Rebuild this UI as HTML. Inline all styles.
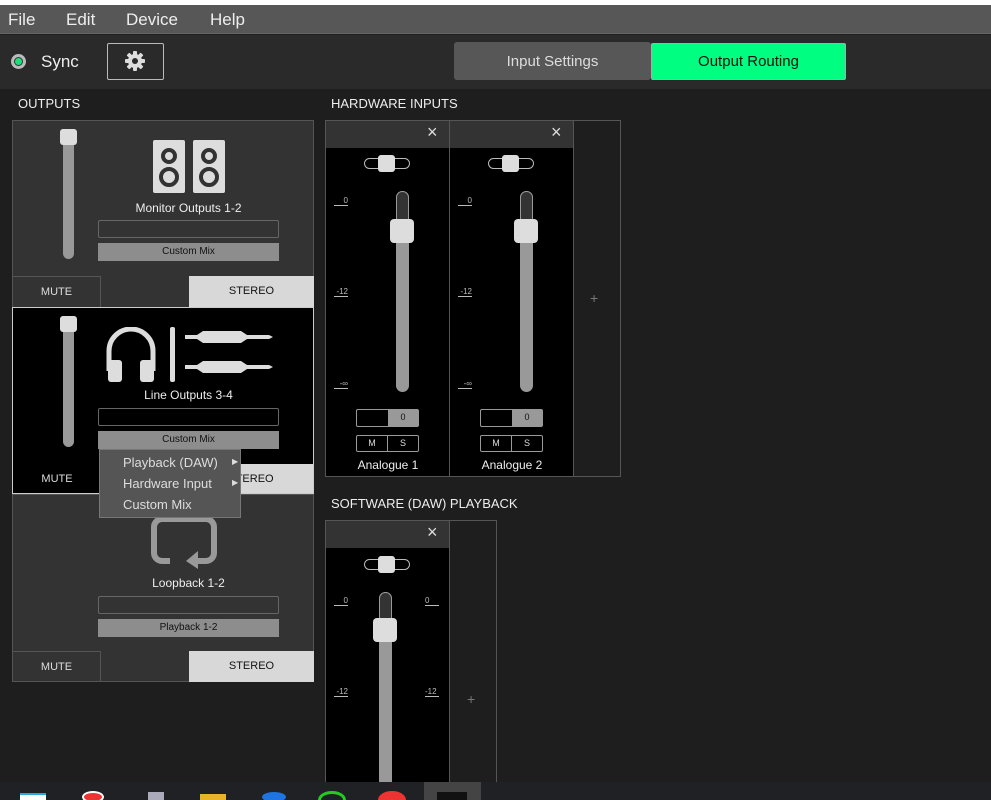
<!DOCTYPE html>
<html style="overflow:hidden;width:991px;height:800px"><head><style>
*{box-sizing:border-box;margin:0;padding:0}
body{width:991px;height:800px;overflow:hidden;background:#1e1e1e;font-family:"Liberation Sans",sans-serif;position:relative;color:#ddd}
.a{position:absolute}
.t{position:absolute;white-space:nowrap}
.btn{position:absolute;font-size:11px;text-align:center;line-height:30px}
.lbl{position:absolute;font-size:8px;color:#bbb;border-bottom:1px solid #bbb;width:14px;text-align:right;line-height:9px}
</style></head><body>
<div class="a" style="left:0;top:0;width:991px;height:5px;background:#fff"></div>
<div class="a" style="left:0;top:5px;width:991px;height:29px;background:#575757;border-bottom:1px solid #666"></div>
<div class="t" style="left:8px;top:10px;font-size:17px;color:#eee">File</div>
<div class="t" style="left:66px;top:10px;font-size:17px;color:#eee">Edit</div>
<div class="t" style="left:126px;top:10px;font-size:17px;color:#eee">Device</div>
<div class="t" style="left:210px;top:10px;font-size:17px;color:#eee">Help</div>
<div class="a" style="left:0;top:35px;width:991px;height:54px;background:#2a2a2a"></div>
<div class="a" style="left:11px;top:54px;width:15px;height:15px;border-radius:50%;background:#bbb"></div>
<div class="a" style="left:14px;top:57px;width:9px;height:9px;border-radius:50%;background:#1ee07a;border:1px solid #333"></div>
<div class="t" style="left:41px;top:52px;font-size:17px;color:#eee">Sync</div>
<div class="a" style="left:107px;top:43px;width:57px;height:37px;border:1px solid #bbb;border-radius:2px"></div>
<svg class="a" style="left:124px;top:50px" width="22" height="22" viewBox="0 0 22 22"><g fill="#ddd"><circle cx="11" cy="11" r="7"/><g id="tt"><rect x="9" y="1" width="4" height="20" rx="1"/></g><rect x="9" y="1" width="4" height="20" rx="1" transform="rotate(45 11 11)"/><rect x="9" y="1" width="4" height="20" rx="1" transform="rotate(90 11 11)"/><rect x="9" y="1" width="4" height="20" rx="1" transform="rotate(135 11 11)"/></g><circle cx="11" cy="11" r="3" fill="#2a2a2a"/></svg>
<div class="a" style="left:454px;top:42px;width:197px;height:38px;background:#575757;border-radius:3px"></div>
<div class="t" style="left:454px;top:53px;width:197px;text-align:center;font-size:15px;color:#ddd">Input Settings</div>
<div class="a" style="left:651px;top:43px;width:195px;height:37px;background:#00ff80;border:1px solid #aaa;border-radius:2px"></div>
<div class="t" style="left:651px;top:53px;width:195px;text-align:center;font-size:15px;color:#111">Output Routing</div>

<div class="t" style="left:18px;top:96px;font-size:13px;color:#eee">OUTPUTS</div>
<div class="t" style="left:331px;top:96px;font-size:13px;color:#eee">HARDWARE INPUTS</div>
<div class="t" style="left:331px;top:496px;font-size:13px;color:#eee">SOFTWARE (DAW) PLAYBACK</div>

<!-- panel 1 -->
<div class="a" style="left:12px;top:120px;width:302px;height:188px;background:#333;border:1px solid #555"></div>
<div class="a" style="left:63px;top:132px;width:11px;height:127px;background:#999;border-radius:6px"></div>
<div class="a" style="left:60px;top:129px;width:17px;height:16px;background:#ddd;border-radius:3px"></div>
<svg class="a" style="left:152px;top:140px" width="74" height="54"><g fill="#ddd"><rect x="1" y="0" width="32" height="53" rx="2"/><rect x="41" y="0" width="32" height="53" rx="2"/></g><g fill="none" stroke="#333" stroke-width="4"><circle cx="17" cy="16" r="6"/><circle cx="17" cy="37" r="8"/><circle cx="57" cy="16" r="6"/><circle cx="57" cy="37" r="8"/></g></svg>
<div class="t" style="left:98px;top:201px;width:181px;text-align:center;font-size:12px;color:#eee">Monitor Outputs 1-2</div>
<div class="a" style="left:98px;top:220px;width:181px;height:18px;border:1px solid #666;border-radius:2px"></div>
<div class="a" style="left:98px;top:243px;width:181px;height:18px;background:#8d8d8d"></div>
<div class="t" style="left:98px;top:246px;width:181px;text-align:center;font-size:10px;color:#111">Custom Mix</div>
<div class="btn" style="left:12px;top:276px;width:89px;height:32px;border:1px solid #555;color:#ddd">MUTE</div>
<div class="btn" style="left:189px;top:276px;width:125px;height:32px;background:#d8d8d8;color:#111">STEREO</div>

<!-- panel 3 -->
<div class="a" style="left:12px;top:494px;width:302px;height:188px;background:#333;border:1px solid #555"></div>
<svg class="a" style="left:150px;top:515px" width="72" height="54"><path d="M20 46 H12 a8 8 0 0 1 -8 -8 V12 a8 8 0 0 1 8 -8 H56 a8 8 0 0 1 8 8 V38 a8 8 0 0 1 -8 8 H44" fill="none" stroke="#999" stroke-width="6"/><path d="M48 36 L36 46 L48 54 Z" fill="#999"/></svg>
<div class="t" style="left:98px;top:576px;width:181px;text-align:center;font-size:12px;color:#eee">Loopback 1-2</div>
<div class="a" style="left:98px;top:596px;width:181px;height:18px;border:1px solid #666;border-radius:2px"></div>
<div class="a" style="left:98px;top:619px;width:181px;height:18px;background:#8d8d8d"></div>
<div class="t" style="left:98px;top:622px;width:181px;text-align:center;font-size:10px;color:#111">Playback 1-2</div>
<div class="btn" style="left:12px;top:651px;width:89px;height:31px;border:1px solid #555;color:#ddd">MUTE</div>
<div class="btn" style="left:189px;top:651px;width:125px;height:31px;background:#d8d8d8;color:#111">STEREO</div>

<!-- panel 2 -->
<div class="a" style="left:12px;top:307px;width:302px;height:187px;background:#000;border:1px solid #ccc"></div>
<div class="a" style="left:63px;top:319px;width:11px;height:128px;background:#999;border-radius:6px"></div>
<div class="a" style="left:60px;top:316px;width:17px;height:16px;background:#ddd;border-radius:3px"></div>
<svg class="a" style="left:105px;top:327px" width="170" height="56"><g fill="#ddd"><path d="M4 44 V24 a22 22 0 0 1 44 0 V44" fill="none" stroke="#ddd" stroke-width="5"/><rect x="3" y="33" width="14" height="22" rx="3"/><rect x="35" y="33" width="14" height="22" rx="3"/><rect x="65" y="0" width="5" height="55" rx="2"/><path d="M80 8 h12 l6 -4 h38 l6 4 h22 l4 2 l-4 2 h-22 l-6 4 h-38 l-6 -4 h-12 z"/><path d="M80 38 h12 l6 -4 h38 l6 4 h22 l4 2 l-4 2 h-22 l-6 4 h-38 l-6 -4 h-12 z"/></g></svg>
<div class="t" style="left:98px;top:388px;width:181px;text-align:center;font-size:12px;color:#eee">Line Outputs 3-4</div>
<div class="a" style="left:98px;top:408px;width:181px;height:18px;border:1px solid #666;border-radius:2px"></div>
<div class="a" style="left:98px;top:431px;width:181px;height:18px;background:#8d8d8d"></div>
<div class="t" style="left:98px;top:434px;width:181px;text-align:center;font-size:10px;color:#111">Custom Mix</div>
<div class="btn" style="left:13px;top:464px;width:88px;height:29px;color:#ddd">MUTE</div>
<div class="btn" style="left:189px;top:464px;width:124px;height:29px;background:#d8d8d8;color:#111">STEREO</div>

<!-- context menu -->
<div class="a" style="left:99px;top:449px;width:142px;height:69px;background:#555;border:1px solid #777"></div>
<div class="t" style="left:123px;top:455px;font-size:13px;color:#ddd">Playback (DAW)</div>
<div class="t" style="left:123px;top:476px;font-size:13px;color:#ddd">Hardware Input</div>
<div class="t" style="left:123px;top:497px;font-size:13px;color:#ddd">Custom Mix</div>
<div class="t" style="left:232px;top:457px;font-size:8px;color:#ddd">▶</div>
<div class="t" style="left:232px;top:478px;font-size:8px;color:#ddd">▶</div>

<!-- hardware inputs -->
<div class="a" style="left:325px;top:120px;width:296px;height:357px;border:1px solid #555;background:#1e1e1e"></div>
<div class="t" style="left:590px;top:290px;font-size:14px;color:#777">+</div>

<div class="a" style="left:326px;top:121px;width:124px;height:355px;background:#000;border-right:1px solid #555"></div>
<div class="a" style="left:326px;top:121px;width:123px;height:27px;background:#333"></div>
<div class="t" style="left:427px;top:122px;font-size:18px;color:#ddd">×</div>
<div class="a" style="left:364px;top:158px;width:46px;height:11px;border:1px solid #bbb;border-radius:6px"></div>
<div class="a" style="left:378px;top:155px;width:17px;height:17px;background:#ddd;border-radius:3px"></div>
<div class="lbl" style="left:334px;top:196px">0</div>
<div class="lbl" style="left:334px;top:287px">-12</div>
<div class="lbl" style="left:334px;top:379px">-∞</div>
<div class="a" style="left:396px;top:191px;width:13px;height:201px;background:#999;border-radius:7px"></div>
<div class="a" style="left:396px;top:191px;width:13px;height:40px;background:#333;border:1px solid #999;border-bottom:none;border-radius:7px 7px 0 0"></div>
<div class="a" style="left:390px;top:219px;width:24px;height:24px;background:#ddd;border-radius:4px"></div>
<div class="a" style="left:356px;top:409px;width:63px;height:18px;border:1px solid #999;border-radius:2px;background:#000"></div>
<div class="a" style="left:388px;top:410px;width:30px;height:16px;background:#999"></div>
<div class="t" style="left:388px;top:412px;width:30px;text-align:center;font-size:9px;color:#111">0</div>
<div class="a" style="left:356px;top:435px;width:63px;height:17px;border:1px solid #999;border-radius:2px"></div>
<div class="a" style="left:387px;top:435px;width:1px;height:17px;background:#999"></div>
<div class="t" style="left:357px;top:438px;width:30px;text-align:center;font-size:9px;color:#ddd">M</div>
<div class="t" style="left:388px;top:438px;width:30px;text-align:center;font-size:9px;color:#ddd">S</div>
<div class="t" style="left:326px;top:458px;width:124px;text-align:center;font-size:12px;color:#eee">Analogue 1</div>

<div class="a" style="left:450px;top:121px;width:124px;height:355px;background:#000;border-right:1px solid #555"></div>
<div class="a" style="left:450px;top:121px;width:123px;height:27px;background:#333"></div>
<div class="t" style="left:551px;top:122px;font-size:18px;color:#ddd">×</div>
<div class="a" style="left:488px;top:158px;width:46px;height:11px;border:1px solid #bbb;border-radius:6px"></div>
<div class="a" style="left:502px;top:155px;width:17px;height:17px;background:#ddd;border-radius:3px"></div>
<div class="lbl" style="left:458px;top:196px">0</div>
<div class="lbl" style="left:458px;top:287px">-12</div>
<div class="lbl" style="left:458px;top:379px">-∞</div>
<div class="a" style="left:520px;top:191px;width:13px;height:201px;background:#999;border-radius:7px"></div>
<div class="a" style="left:520px;top:191px;width:13px;height:40px;background:#333;border:1px solid #999;border-bottom:none;border-radius:7px 7px 0 0"></div>
<div class="a" style="left:514px;top:219px;width:24px;height:24px;background:#ddd;border-radius:4px"></div>
<div class="a" style="left:480px;top:409px;width:63px;height:18px;border:1px solid #999;border-radius:2px;background:#000"></div>
<div class="a" style="left:512px;top:410px;width:30px;height:16px;background:#999"></div>
<div class="t" style="left:512px;top:412px;width:30px;text-align:center;font-size:9px;color:#111">0</div>
<div class="a" style="left:480px;top:435px;width:63px;height:17px;border:1px solid #999;border-radius:2px"></div>
<div class="a" style="left:511px;top:435px;width:1px;height:17px;background:#999"></div>
<div class="t" style="left:481px;top:438px;width:30px;text-align:center;font-size:9px;color:#ddd">M</div>
<div class="t" style="left:512px;top:438px;width:30px;text-align:center;font-size:9px;color:#ddd">S</div>
<div class="t" style="left:450px;top:458px;width:124px;text-align:center;font-size:12px;color:#eee">Analogue 2</div>

<!-- software playback -->
<div class="a" style="left:325px;top:520px;width:172px;height:262px;border:1px solid #555;border-bottom:none;background:#1e1e1e"></div>
<div class="t" style="left:467px;top:691px;font-size:14px;color:#777">+</div>
<div class="a" style="left:326px;top:521px;width:124px;height:261px;background:#000;border-right:1px solid #555"></div>
<div class="a" style="left:326px;top:521px;width:123px;height:27px;background:#333"></div>
<div class="t" style="left:427px;top:522px;font-size:18px;color:#ddd">×</div>
<div class="a" style="left:364px;top:559px;width:46px;height:11px;border:1px solid #bbb;border-radius:6px"></div>
<div class="a" style="left:378px;top:556px;width:17px;height:17px;background:#ddd;border-radius:3px"></div>
<div class="lbl" style="left:334px;top:596px">0</div>
<div class="lbl" style="left:334px;top:687px">-12</div>
<div class="lbl" style="left:425px;top:596px;text-align:left">0</div>
<div class="lbl" style="left:425px;top:687px;text-align:left">-12</div>
<div class="a" style="left:379px;top:592px;width:13px;height:190px;background:#999;border-radius:7px 7px 0 0"></div>
<div class="a" style="left:379px;top:592px;width:13px;height:40px;background:#333;border:1px solid #999;border-bottom:none;border-radius:7px 7px 0 0"></div>
<div class="a" style="left:373px;top:618px;width:24px;height:24px;background:#ddd;border-radius:4px"></div>

<!-- taskbar -->
<div class="a" style="left:0;top:782px;width:991px;height:18px;background:#202124;overflow:hidden">
<div class="a" style="left:20px;top:11px;width:26px;height:7px;background:#fff;border-top:2px solid #29a8e0"></div>
<div class="a" style="left:82px;top:9px;width:22px;height:12px;border-radius:50%;background:#e33;border:2px solid #fff"></div>
<div class="a" style="left:148px;top:10px;width:16px;height:8px;background:#aab"></div>
<div class="a" style="left:200px;top:12px;width:26px;height:6px;background:#e8b42a"></div>
<div class="a" style="left:262px;top:10px;width:24px;height:10px;border-radius:50%;background:#1e74e0"></div>
<div class="a" style="left:318px;top:9px;width:28px;height:18px;border-radius:50%;border:3px solid #2c2"></div>
<div class="a" style="left:378px;top:9px;width:28px;height:18px;border-radius:50%;background:#e33"></div>
<div class="a" style="left:424px;top:0;width:57px;height:18px;background:#444"></div>
<div class="a" style="left:437px;top:10px;width:30px;height:8px;background:#111"></div>
</div>
</body></html>
